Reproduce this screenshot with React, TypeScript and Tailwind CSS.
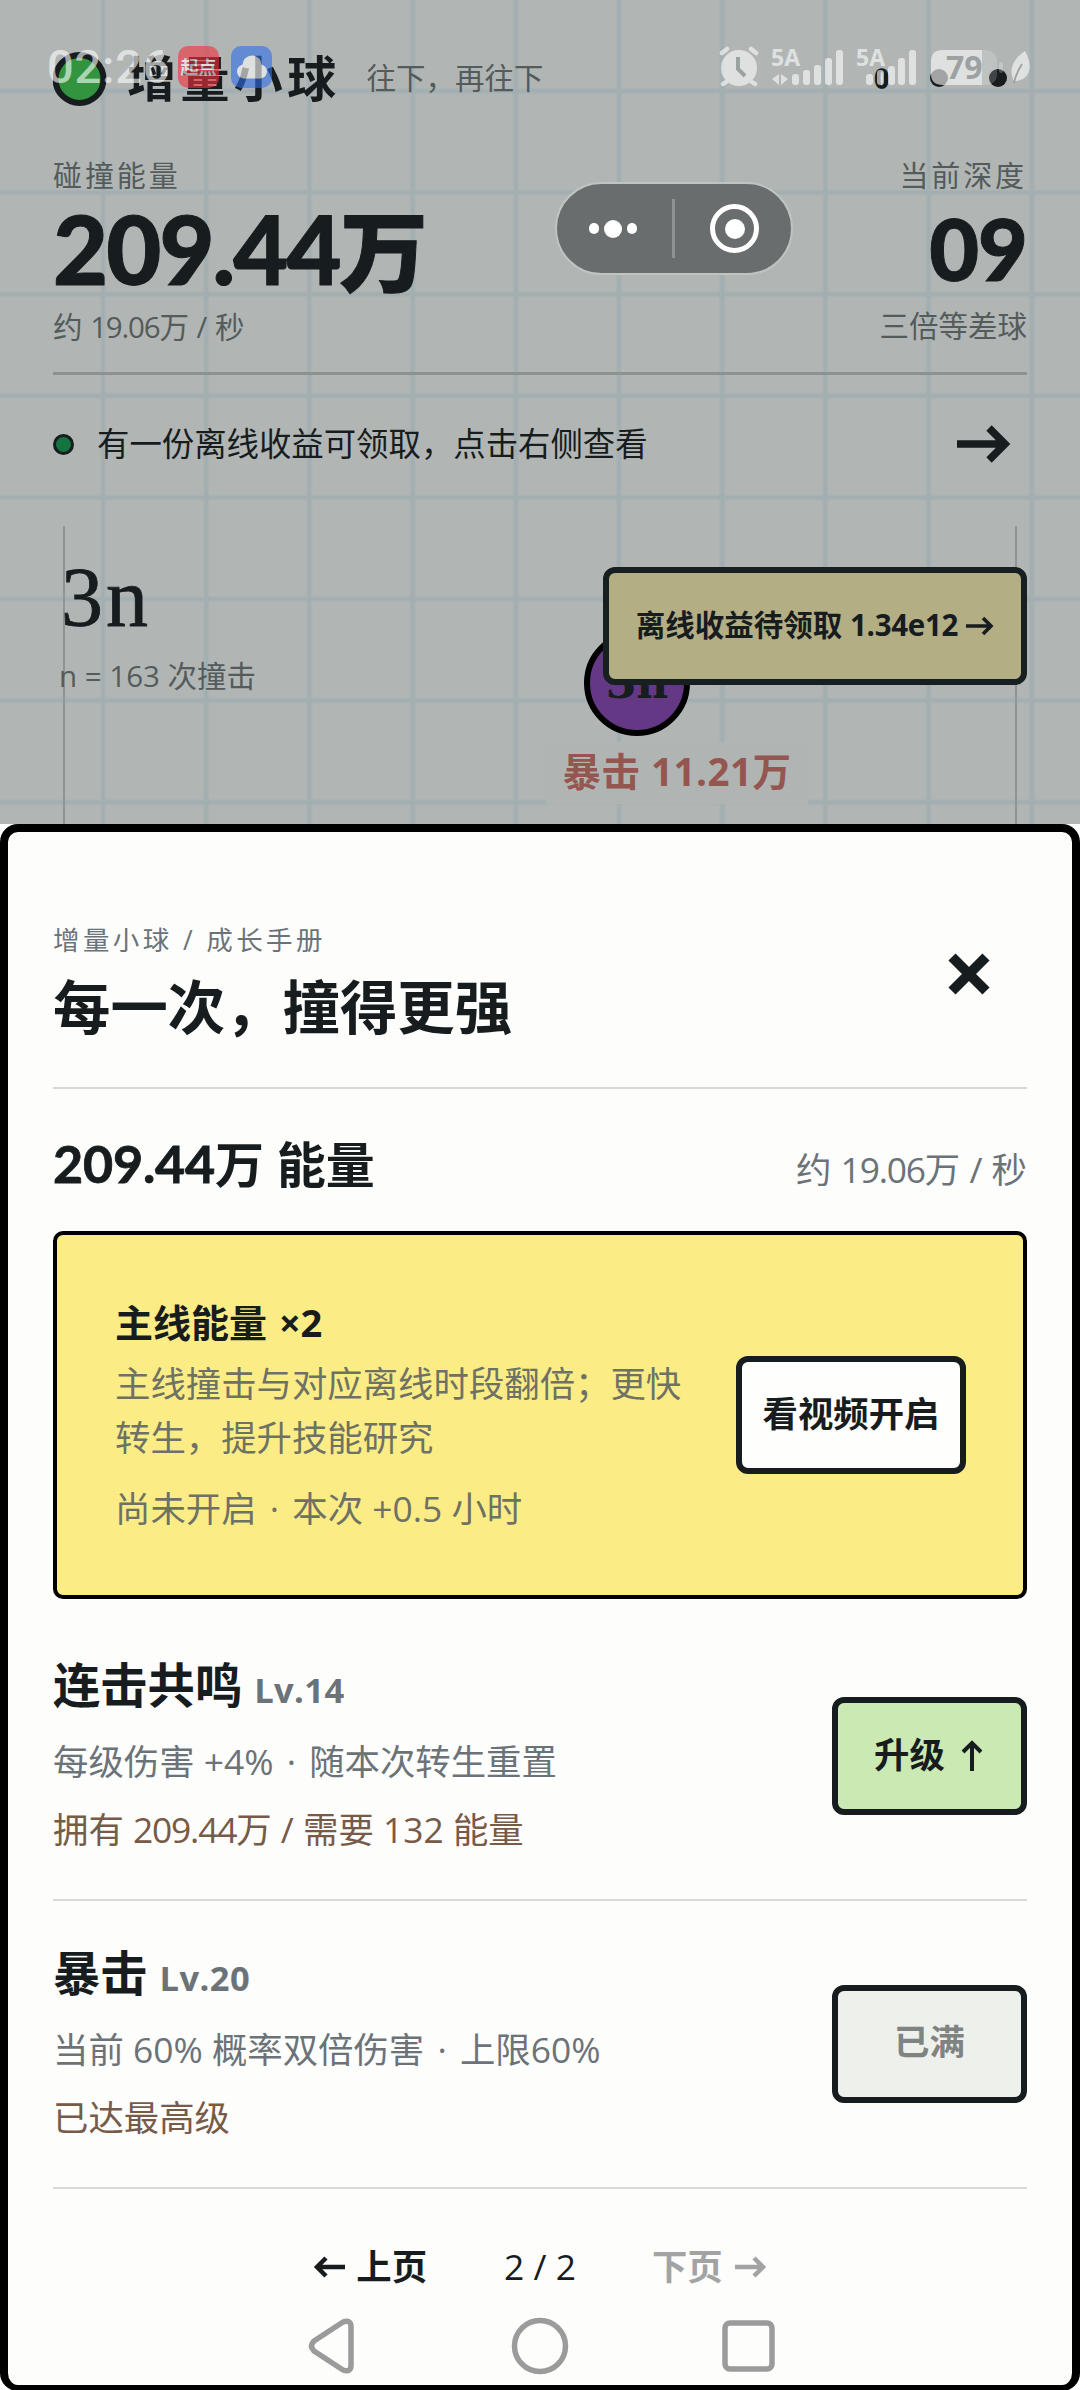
import React from "react"

const INK = "text-[#171c1e]"
const MUTED = "text-[#6b7378]"
const DIM = "text-[#545b5b]"

function Num({ children }: { children: React.ReactNode }) {
  return <span className="tracking-[-1.2px]">{children}</span>
}

function Dot() {
  return <span className="mx-[4px]"> · </span>
}

function StatusBar() {
  return (
    <div className="absolute left-0 top-0 z-30 flex h-[134px] w-full items-start justify-between pl-[47px] pr-[49px] pt-[36px] opacity-60">
      <div className="flex items-center pt-[10px]">
        <span className="w-[131px] font-['Roboto'] text-[47px] font-medium leading-[42px] tracking-[0.8px] text-white">02:26</span>
        <span className="flex h-[42px] w-[41px] items-center justify-center rounded-[10px] bg-[#f2303c] text-[18px] font-bold text-white">
          起点
        </span>
        <span className="ml-[12px] flex h-[42px] w-[41px] items-center justify-center rounded-[10px] bg-[#2f6fe8]">
          <svg width="32" height="26" viewBox="0 0 32 26" fill="#fff">
            <circle cx="8" cy="17.5" r="7" />
            <circle cx="16" cy="11" r="9.5" />
            <circle cx="24" cy="17.5" r="7" />
            <rect x="8" y="14" width="16" height="10.5" />
          </svg>
        </span>
      </div>
      <svg width="312" height="56" viewBox="719 36 312 56" fill="#fff">
        <circle cx="739" cy="68" r="18" />
        <path d="M722 53l5-4M756 53l-5-4M726 82l-3 2M752 82l3 2" stroke="#fff" strokeWidth="4.5" strokeLinecap="round" />
        <path d="M738 57v12l7 7" fill="none" stroke="#8f9594" strokeWidth="4" />
        <text x="771" y="66" fontFamily="Open Sans" fontSize="23" fontWeight="700">5A</text>
        <path d="M772 79l7-5v11zM788 79l-7-5v11z" />
        <rect x="792" y="74" width="7" height="11" rx="3" />
        <rect x="803" y="70" width="7" height="15" rx="3" />
        <rect x="814" y="65" width="7" height="20" rx="3" />
        <rect x="825" y="58" width="7" height="27" rx="3" />
        <rect x="836" y="50" width="7" height="35" rx="3" />
        <text x="856" y="66" fontFamily="Open Sans" fontSize="23" fontWeight="700">5A</text>
        <rect x="866" y="74" width="7" height="11" rx="3" />
        <rect x="877" y="70" width="7" height="15" rx="3" />
        <rect x="888" y="66" width="7" height="19" rx="3" />
        <rect x="898" y="58" width="7" height="27" rx="3" />
        <rect x="909" y="50" width="7" height="35" rx="3" />
        <path d="M943 50h39v35h-39q-12 0-12-11V61q0-11 12-11z" />
        <path d="M982 50h2q13 0 13 11v13q0 11-13 11h-2z" opacity=".3" />
        <rect x="999" y="62" width="4" height="11" rx="2" opacity=".4" />
        <text x="946" y="79" fontFamily="Open Sans" fontSize="32" fontWeight="700" fill="#8f9594">79</text>
        <path d="M1025 51c-14 9-16 21-11 30 14 0 21-12 11-30z" />
        <path d="M1014 83q2-10 8-19" fill="none" stroke="#8f9594" strokeWidth="1.8" />
      </svg>
    </div>
  )
}

function Capsule() {
  return (
    <div className="absolute left-[555px] top-[182px] z-30 flex h-[93px] w-[238px] items-center rounded-full border-2 border-[#bfc3c2] bg-[#6a6d6d]">
      <div className="flex flex-1 items-center justify-center gap-[5px] pr-[2px]">
        <i className="h-[11px] w-[10px] rounded-full bg-white" />
        <i className="h-[18px] w-[18px] rounded-full bg-white" />
        <i className="h-[11px] w-[10px] rounded-full bg-white" />
      </div>
      <i className="h-[59px] w-[3px] bg-[#8f9292]" />
      <div className="flex flex-1 items-center justify-center pl-[4px]">
        <div className="flex h-[49px] w-[49px] items-center justify-center rounded-full border-[5px] border-white">
          <i className="h-5 w-5 rounded-full bg-white" />
        </div>
      </div>
    </div>
  )
}

function GridLines() {
  const cols = Array.from({ length: 10 }, (_, i) => 103 + i * 103.2)
  const rows = Array.from({ length: 8 }, (_, i) => 91 + i * 101.6)
  return (
    <svg className="absolute left-0 top-0" width="1080" height="824" stroke="#a3aeb1">
      {cols.map((x) => (
        <g key={x}>
          <line x1={x} x2={x} y1="0" y2="824" strokeWidth="6" opacity=".45" />
          <line x1={x} x2={x} y1="0" y2="824" strokeWidth="3" />
        </g>
      ))}
      {rows.map((y) => (
        <g key={y}>
          <line x1="0" x2="1080" y1={y} y2={y} strokeWidth="6" opacity=".45" />
          <line x1="0" x2="1080" y1={y} y2={y} strokeWidth="3" />
        </g>
      ))}
    </svg>
  )
}

function Game() {
  return (
    <section className={`relative h-[824px] overflow-hidden bg-[#b1b6b5] px-[53px] ${INK}`}>
      <GridLines />
      <div className="relative">
        <header className="flex h-[158px] items-start pt-[52px]">
          <svg width="54" height="54" viewBox="0 0 54 54">
            <ellipse cx="26.5" cy="27" rx="24" ry="24" fill="#33943f" stroke="#171c1e" strokeWidth="6" />
          </svg>
          <b className="ml-[20px] text-[49px] leading-[52px] tracking-[4.4px]">增量小球</b>
          <span className={`ml-[26px] pt-[2px] text-[29.5px] leading-[48px] ${DIM}`}>往下，再往下</span>
          <span className="ml-auto flex items-center pr-[20px] pt-[17px]">
            <b className="mr-[41px] font-['Liberation_Serif'] text-[29px] leading-[18px] [-webkit-text-stroke:1.5px_#171c1e]">0</b>
            <i className="h-[18px] w-[18px] rounded-full bg-[#171c1e]" />
            <i className="ml-[41px] h-[18px] w-[18px] rounded-full bg-[#171c1e]" />
          </span>
        </header>
        <div className="flex h-[214px] justify-between">
          <div>
            <p className={`text-[29px] leading-[36px] tracking-[2.9px] ${DIM}`}>碰撞能量</p>
            <p className="pt-[2px] text-[88px] font-black leading-[104px] [-webkit-text-stroke:1px_#171c1e]">
              <span className="font-['Lato'] text-[95px] tracking-[-1.9px]">209.44</span>万
            </p>
            <p className={`pt-[6px] text-[29.5px] leading-[36px] ${DIM}`}>
              约 <Num>19.06</Num>万 / 秒
            </p>
          </div>
          <div className="text-right">
            <p className={`text-[29px] leading-[36px] tracking-[2.9px] ${DIM}`}>当前深度</p>
            <p className="pt-[2px] font-['Lato'] text-[86px] font-black leading-[104px] [-webkit-text-stroke:1px_#171c1e]">
              <span className="tracking-[-1px]">09</span>
            </p>
            <p className={`pt-[8px] text-[29.5px] leading-[36px] ${DIM}`}>三倍等差球</p>
          </div>
        </div>
        <div className="flex h-[154px] items-center border-t-[3px] border-[#8c9291] pb-[13px]">
          <i className="h-[21px] w-[21px] rounded-full border-[3px] border-[#171c1e] bg-[#14733f]" />
          <span className="ml-[23px] pb-[2px] text-[32.4px]">有一份离线收益可领取，点击右侧查看</span>
          <svg className="ml-auto mr-[16px]" width="54" height="40" viewBox="0 0 54 40" fill="none" stroke="#171c1e" strokeWidth="7.5">
            <path d="M0 20h47M32 4l16 16-16 16" />
          </svg>
        </div>
        <div className="relative mx-[10px] h-[300px] border-x-2 border-[#8e9594] pt-[29px]">
          <p className="-ml-[4px] font-['Liberation_Serif'] text-[84px] leading-[86px] tracking-[3px] [-webkit-text-stroke:0.8px_#171c1e]">3n</p>
          <p className={`-ml-[6px] pt-[17px] text-[29.5px] leading-[36px] ${DIM}`}>n = 163 次撞击</p>
          <div className="absolute left-[519px] top-[104px] flex h-[106px] w-[106px] items-center justify-center rounded-full border-[6px] border-black bg-[#643884] font-['DejaVu_Serif'] text-[44px] font-bold">
            3n
          </div>
          <div className="absolute left-[481px] top-[216px] flex h-[62px] w-[262px] items-center justify-center bg-[#b0b5b4] pb-[2px] text-[38.5px] font-bold tracking-[0.5px] text-[#95564f]">
            暴击 11.21万
          </div>
          <div className="absolute -right-[12px] top-[41px] flex h-[118px] w-[424px] items-center justify-center gap-[8px] rounded-[12px] border-[6px] border-[#171f20] bg-[#b3ae84] pb-[1px] text-[29.5px] font-bold">
            <span>
              离线收益待领取 <span className="tracking-[-0.3px]">1.34e12</span>
            </span>
            <svg width="28" height="20" viewBox="0 0 28 20" fill="none" stroke="#171c1e" strokeWidth="3.6">
              <path d="M0 10h25M17 2l8 8-8 8" />
            </svg>
          </div>
        </div>
      </div>
    </section>
  )
}

interface Skill {
  name: string
  level: number
  desc: React.ReactNode
  cost: React.ReactNode
  maxed?: boolean
}

const skills: Skill[] = [
  {
    name: "连击共鸣",
    level: 14,
    desc: <>每级伤害 +4%<Dot />随本次转生重置</>,
    cost: <>拥有 <Num>209.44</Num>万 / 需要 132 能量</>,
  },
  {
    name: "暴击",
    level: 20,
    desc: <>当前 60% 概率双倍伤害<Dot />上限60%</>,
    cost: "已达最高级",
    maxed: true,
  },
]

function SkillRow({ skill }: { skill: Skill }) {
  return (
    <div className="flex h-[288px] items-center justify-between border-b-2 border-[#d7d9d9]">
      <div>
        <div className="flex items-baseline gap-[12px] leading-[64px]">
          <b className="text-[47.3px]">{skill.name}</b>
          <b className={`text-[34.5px] tracking-[0.4px] ${MUTED}`}>Lv.{skill.level}</b>
        </div>
        <p className={`pt-[9px] text-[35.4px] leading-[60px] ${MUTED}`}>{skill.desc}</p>
        <p className="pt-[8px] text-[35.4px] leading-[60px] text-[#775a48]">{skill.cost}</p>
      </div>
      {skill.maxed ? (
        <button className="h-[118px] w-[195px] rounded-[12px] border-[6px] border-[#171c1e] bg-[#eef0ec] pb-[4px] text-[35.4px] font-bold text-[#7f8483]">
          已满
        </button>
      ) : (
        <button className="flex h-[118px] w-[195px] items-center justify-center gap-[16px] rounded-[12px] border-[6px] border-[#171c1e] bg-[#cbe9b2] pb-[3px] pr-[2px] text-[35.4px] font-bold">
          升级
          <svg width="22" height="32" viewBox="0 0 22 32" fill="none" stroke="#171c1e" strokeWidth="4">
            <path d="M11 32V4M2 13l9-9 9 9" />
          </svg>
        </button>
      )}
    </div>
  )
}

function Sheet() {
  return (
    <section className={`relative h-[1567px] rounded-[18px] border-8 border-b-[6px] border-black bg-[#fdfdfc] px-[45px] ${INK}`}>
      <div className="flex h-[257px] items-start justify-between border-b-2 border-[#d7d9d9] pt-[88px]">
        <div>
          <p className={`text-[26.5px] leading-[40px] tracking-[3.4px] ${MUTED}`}>增量小球 / 成长手册</p>
          <h1 className="pt-[12px] text-[57.4px] font-bold leading-[70px]">每一次，撞得更强</h1>
        </div>
        <svg className="mr-[37px] mt-[33px]" width="42" height="42" viewBox="0 0 42 42" stroke="#171c1e" strokeWidth="10">
          <path d="M4 4l34 34M38 4L4 38" />
        </svg>
      </div>
      <div className="flex h-[142px] items-center justify-between pt-[16px]">
        <p className="pb-[10px] text-[49px] font-bold">
          <span className="font-['Lato'] text-[52px] tracking-[-0.2px] [-webkit-text-stroke:0.8px_#171c1e]">209.44</span>万 能量
        </p>
        <p className={`pt-[4px] text-[35.4px] ${MUTED}`}>
          约 <Num>19.06</Num>万 / 秒
        </p>
      </div>
      <div className="flex h-[368px] items-center justify-between rounded-[10px] border-4 border-black bg-[#fcec85] pl-[58px] pr-[57px]">
        <div>
          <h2 className="-mt-[4px] pb-[4px] text-[38px] font-bold leading-[60px]">主线能量 <span className="ml-[2px]">×2</span></h2>
          <p className="w-[580px] text-[35.4px] leading-[54px] text-[#6d7264]">
            主线撞击与对应离线时段翻倍；更快
            <br />
            转生，提升技能研究
          </p>
          <p className="pt-[17px] text-[35.4px] leading-[54px] text-[#6d7264]">尚未开启<Dot />本次 +0.5 小时</p>
        </div>
        <button className="h-[118px] w-[230px] rounded-[12px] border-[6px] border-[#171c1e] bg-[#fefefc] pb-[2px] text-[35.4px] font-bold">
          看视频开启
        </button>
      </div>
      <div className="pt-[14px]">
        {skills.map((skill) => (
          <SkillRow key={skill.name} skill={skill} />
        ))}
      </div>
      <div className="flex h-[156px] items-center justify-center text-[35.4px]">
        <span className="flex items-center gap-[11px] font-bold">
          <svg width="32" height="24" viewBox="0 0 32 24" fill="none" stroke="#171c1e" strokeWidth="4.5">
            <path d="M32 12H4M13 3l-9 9 9 9" />
          </svg>
          上页
        </span>
        <span className="ml-[77px] mr-[76px]">2 / 2</span>
        <span className="flex items-center gap-[12px] font-bold text-[#a2a4a4]">
          下页
          <svg width="32" height="24" viewBox="0 0 32 24" fill="none" stroke="#a2a4a4" strokeWidth="4.5">
            <path d="M0 12h28M19 3l9 9-9 9" />
          </svg>
        </span>
      </div>
      <svg className="absolute left-[292px] top-[1478px]" width="480" height="72" viewBox="300 2310 480 72" fill="none" stroke="#9b9b9b" strokeWidth="5.5" strokeLinejoin="round">
        <path d="M343 2322l-29 19q-5 5 0 10l29 19q8 3 8-5v-38q0-8-8-5z" />
        <circle cx="540" cy="2346" r="25.5" />
        <rect x="725" y="2323" width="47" height="46" rx="5" />
      </svg>
    </section>
  )
}

export default function App() {
  return (
    <div className="relative h-[2390px] w-[1080px] overflow-hidden bg-white font-['Open_Sans','Noto_Sans_CJK_SC',sans-serif]">
      <Game />
      <Sheet />
      <Capsule />
      <StatusBar />
    </div>
  )
}
